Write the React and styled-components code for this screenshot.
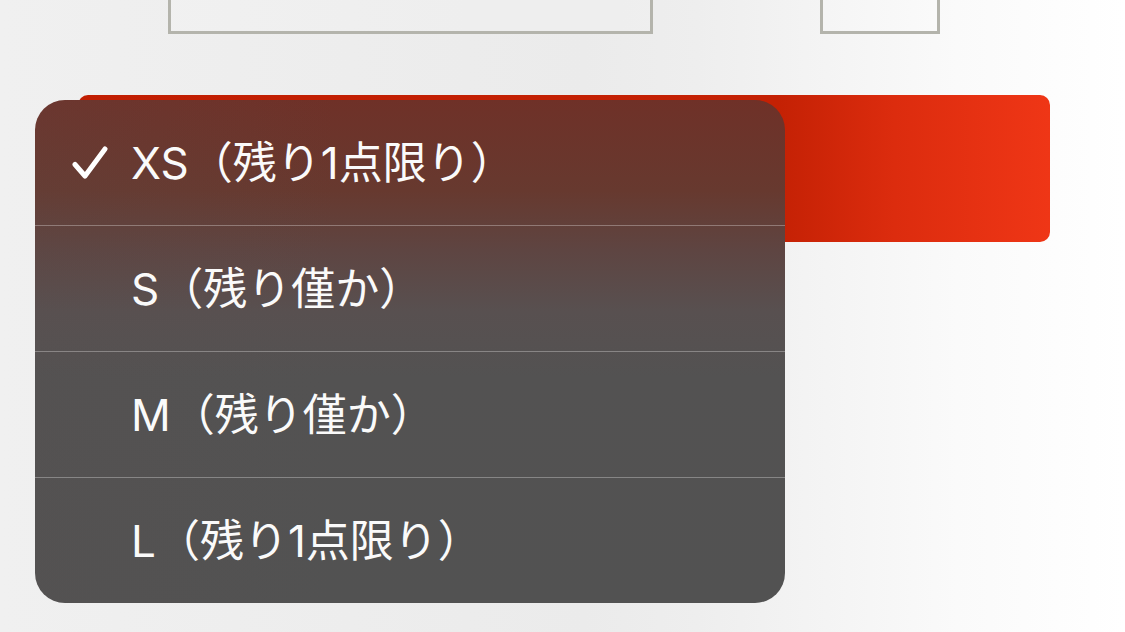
import React from 'react';
import styled, { createGlobalStyle } from 'styled-components';

const GlobalStyle = createGlobalStyle`
  html, body {
    margin: 0;
    padding: 0;
  }
  body {
    font-family: Inter, "Noto Sans CJK JP", sans-serif;
  }
`;

const sizes = [
  { id: 'xs', label: 'XS（残り1点限り）', checked: true },
  { id: 's', label: 'S（残り僅か）' },
  { id: 'm', label: 'M（残り僅か）' },
  { id: 'l', label: 'L（残り1点限り）' },
];

const App = () => {
  return (
    <>
      <GlobalStyle />
      <Page>
        <FieldRow>
          <FieldBox width={485} />
          <FieldBox width={120} />
        </FieldRow>
        <CartButton />

        <Menu>
          {sizes.map(({ id, label, checked }) => (
            <MenuItem key={id}>
              <CheckSlot>
                {checked && (
                  <svg width="36" height="34" viewBox="0 0 36 34">
                    <path
                      d="M3 18.5 L13 30 L33 3"
                      fill="none"
                      stroke="#fff"
                      strokeWidth="5"
                      strokeLinecap="round"
                      strokeLinejoin="round"
                    />
                  </svg>
                )}
              </CheckSlot>
              <ItemLabel>{label}</ItemLabel>
            </MenuItem>
          ))}
        </Menu>
      </Page>
    </>
  );
};

const Page = styled.div`
  position: relative;
  width: 1125px;
  height: 632px;
  overflow: hidden;
  background: linear-gradient(90deg, #f0f0f0 0%, #ebebeb 52%, #eeeeee 62%, #fafafa 85%, #ffffff 100%);
`;

const FieldRow = styled.div`
  display: flex;
  gap: 167px;
  padding-left: 168px;
  margin-top: -29px;
`;

const FieldBox = styled.div`
  width: ${p => p.width}px;
  height: 63px;
  box-sizing: border-box;
  border: 3px solid #b4b4ac;
  background: rgba(255, 255, 255, 0.15);
`;

const CartButton = styled.div`
  margin: 61px 0 0 78px;
  width: 972px;
  height: 147px;
  border-radius: 10px;
  background: linear-gradient(90deg, #c11e02 0%, #c42104 72%, #dc2c0e 84%, #ef3616 100%);
`;

const Menu = styled.div`
  position: absolute;
  left: 35px;
  top: 100px;
  width: 750px;
  height: 503px;
  border-radius: 30px;
  overflow: hidden;
  display: flex;
  flex-direction: column;
  background:
    linear-gradient(90deg, rgba(90, 80, 80, 0.18) 0%, rgba(90, 80, 80, 0) 40%),
    linear-gradient(180deg, #6f3128 0%, #67392f 18%, #5e4542 30%, #585050 42%, #535252 55%, #525252 100%);
`;

const MenuItem = styled.div`
  flex: 1;
  display: flex;
  align-items: center;
  padding-left: 37px;
  color: #fafafa;
  & + & {
    border-top: 1px solid rgba(255, 255, 255, 0.3);
  }
`;

const CheckSlot = styled.div`
  width: 59px;
  height: 34px;
  display: flex;
  align-items: center;
`;

const ItemLabel = styled.span`
  font-size: 44px;
  line-height: 1;
`;

export default App;
